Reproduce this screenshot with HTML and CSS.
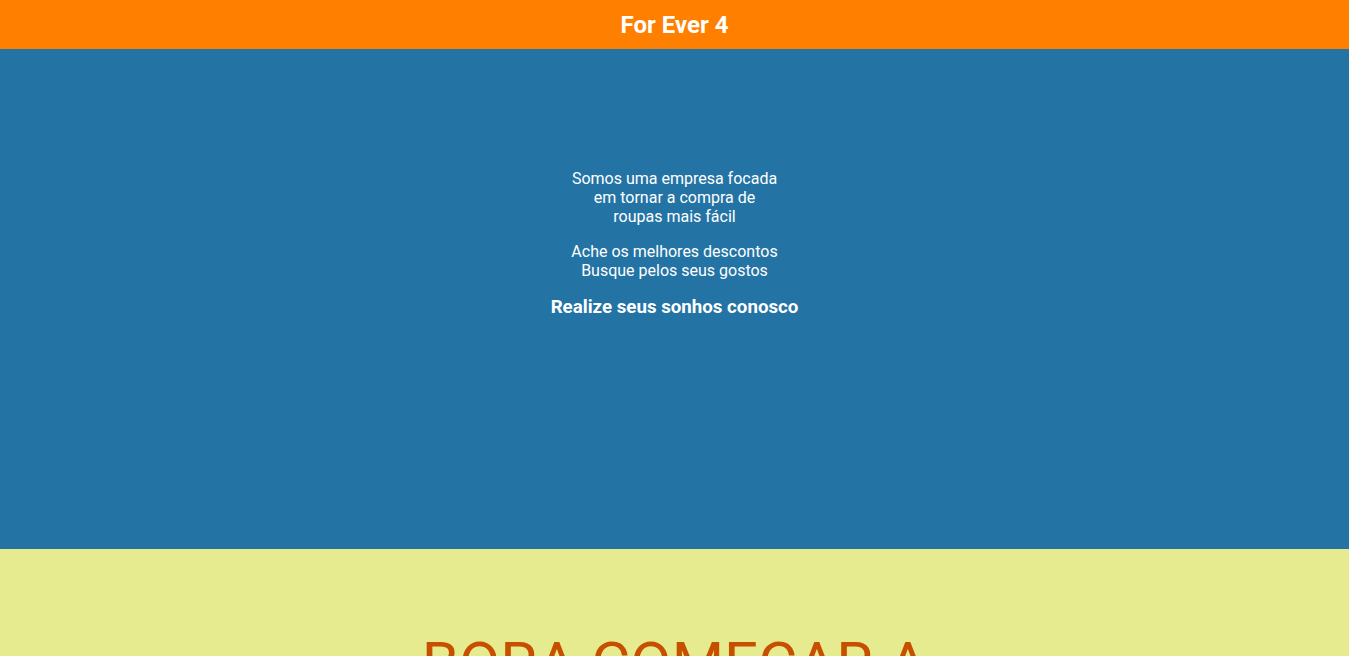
FILE: index.html
```html
<!DOCTYPE html>
<html lang="pt-BR">
<head>
<meta charset="utf-8">
<title>For Ever 4</title>
<link rel="stylesheet" href="styles.css">
</head>
<body>
<header class="topbar">
  <h1 class="brand">For Ever 4</h1>
</header>
<section class="hero">
  <p class="hero-text">Somos uma empresa focada<br>em tornar a compra de<br>roupas mais fácil</p>
  <p class="hero-text">Ache os melhores descontos<br>Busque pelos seus gostos</p>
  <h3 class="hero-strong">Realize seus sonhos conosco</h3>
</section>
<section class="start">
  <h2 class="start-title">BORA COMEÇAR A<br>COMPRAR?</h2>
</section>
</body>
</html>
```
FILE: styles.css
```css
* { box-sizing: border-box; }
html, body {
  margin: 0;
  padding: 0;
}
body {
  font-family: Roboto, "Noto Sans", sans-serif;
  color: #fff;
  text-align: center;
}
.topbar {
  background: #ff7f00;
  height: 49px;
  display: flex;
  align-items: center;
  justify-content: center;
}
.brand {
  margin: 0;
  font-size: 24px;
  font-weight: 700;
  line-height: 28px;
}
.hero {
  background: #2374a5;
  height: 500px;
  padding-top: 104px;
  display: flow-root;
}
.hero-text {
  margin: 16px 0;
  font-size: 16px;
  line-height: normal;
}
.hero-strong {
  margin: 16px 0;
  font-size: 18.72px;
  font-weight: 700;
  line-height: normal;
}
.start {
  background: #e7eb90;
  padding-top: 40px;
  display: flow-root;
  min-height: 300px;
}
.start-title {
  margin: 40px 0;
  font-size: 60px;
  font-weight: 400;
  line-height: 70px;
  color: #c75000;
}
```
